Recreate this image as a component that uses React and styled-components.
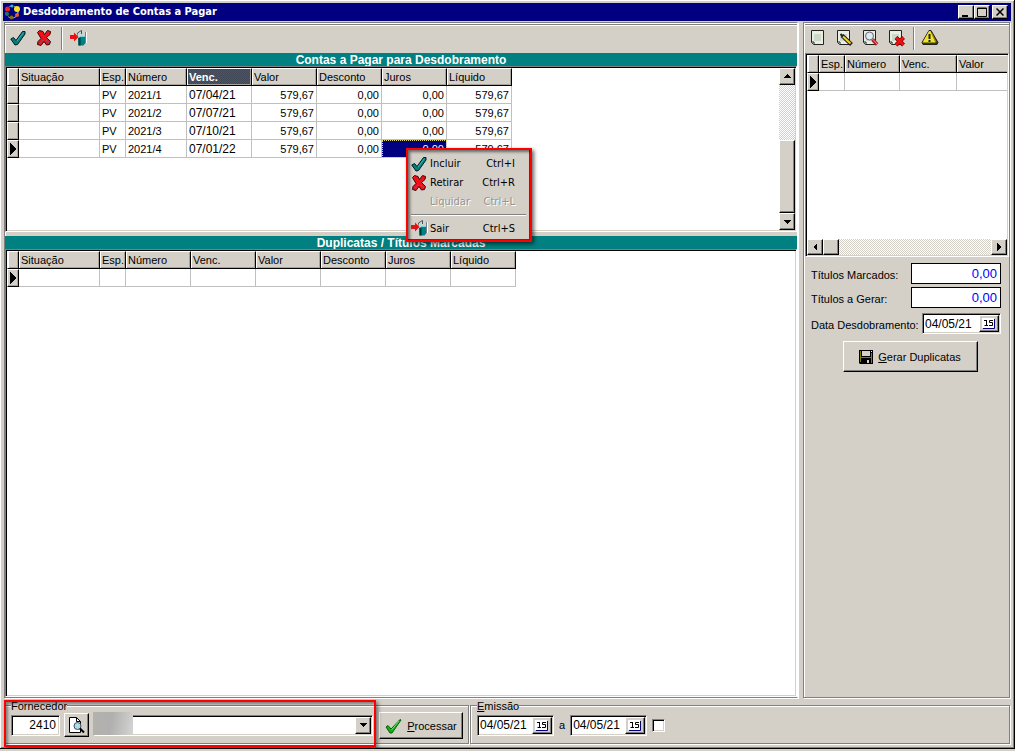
import React from "react";
import styled, { createGlobalStyle, css } from "styled-components";

const face = "#d4d0c8";
const shade = "#808080";
const navy = "#000080";
const teal = "#008080";
const sans = '"Liberation Sans", Arial, sans-serif';
const tahoma = '"DejaVu Sans Condensed", "DejaVu Sans", sans-serif';

const GlobalStyle = createGlobalStyle`
  * { box-sizing: border-box; }
  body { margin: 0; background: ${face}; color: #000; font: 11px/14px ${sans}; }
  button, input, select { font: inherit; color: inherit; margin: 0; border-radius: 0; }
`;

const raised = css`
  background: ${face};
  border: 1px solid;
  border-color: #fff #000 #000 #fff;
  box-shadow: inset -1px -1px 0 ${shade};
`;

const sunken = css`
  border: 1px solid;
  border-color: ${shade} #fff #fff ${shade};
  box-shadow: inset 1px 1px 0 #000, inset -1px -1px 0 ${face};
`;

const Window = styled.div`
  min-height: calc(100vh - 2px);
  display: flex;
  flex-direction: column;
  padding: 3px 3px 4px 3px;
  border-right: 1px solid #000;
  border-bottom: 1px solid #000;
  box-shadow: inset 1px 1px 0 #fff, inset -1px -1px 0 ${shade};
`;

const TitleBar = styled.header`
  height: 18px;
  display: flex;
  align-items: center;
  gap: 2px;
  padding: 0 3px 0 1px;
  background: ${navy};
  color: #fff;
`;

const Title = styled.h1`
  flex: 1;
  margin: 0;
  font: bold 11px/14px ${tahoma};
`;

const CaptionButton = styled.button`
  ${raised}
  width: 16px;
  height: 14px;
  padding: 0;
  display: grid;
  place-items: center;
  margin-left: ${(p) => (p.$apart ? "0" : "-2px")};
`;

const Main = styled.main`
  flex: 1;
  display: flex;
  gap: 5px;
  margin: 1px 1px 0;
`;

const Panel = styled.section`
  display: flex;
  flex-direction: column;
  flex: ${(p) => (p.$fixed ? "0 0 207px" : "1 1 0")};
  min-width: 0;
  padding: ${(p) => (p.$fixed ? "0 0 0 1px" : "0")};
  border: 1px solid ${shade};
  border-right-color: ${(p) => (p.$fixed ? shade : "#fff")};
  box-shadow: 1px 1px 0 #fff, inset 1px 1px 0 #fff;
`;

const Toolbar = styled.div`
  height: 29px;
  display: flex;
  align-items: center;
  gap: 8px;
  padding: 0 4px 2px;
  margin-top: 1px;
  border-top: 1px solid ${shade};
  box-shadow: inset 0 1px 0 #fff;
`;

const ToolButton = styled.button`
  width: 18px;
  height: 18px;
  padding: 0;
  border: 0;
  background: none;
  display: grid;
  place-items: center;
`;

const Divider = styled.span`
  width: 2px;
  height: 23px;
  margin-right: -2px;
  border-left: 1px solid ${shade};
  border-right: 1px solid #fff;
`;

const Band = styled.h2`
  height: 13px;
  margin: ${(p) => (p.$spaced ? "4px 0 0" : "0")};
  background: ${teal};
  color: #fff;
  text-align: center;
  font: bold 12px/14px ${sans};
`;

const GridFrame = styled.div`
  ${sunken}
  display: flex;
  flex-direction: ${(p) => (p.$column ? "column" : "row")};
  flex: ${(p) => (p.$height ? "none" : "1")};
  height: ${(p) => p.$height || "auto"};
  padding: 1px;
  background: #fff;
`;

const GridBody = styled.div`
  flex: 1;
  min-width: 0;
  overflow: ${(p) => (p.$clip ? "hidden" : "visible")};
`;

const Table = styled.table`
  table-layout: fixed;
  width: ${(p) => p.$width}px;
  border-collapse: separate;
  border-spacing: 0;
`;

const HeadCell = styled.th`
  height: 18px;
  padding: 0 2px;
  background: ${face};
  border: 1px solid;
  border-color: #fff #000 #000 #fff;
  border-left-width: ${(p) => (p.$mark ? "1px" : "0")};
  box-shadow: inset 1px 0 0 #fff, inset -1px -1px 0 #a8a49c;
  text-align: left;
  font-weight: normal;
  line-height: 14px;
  white-space: nowrap;
  ${(p) =>
    p.$active &&
    css`
      color: #fff;
      font-weight: bold;
      background: repeating-conic-gradient(#007878 0 25%, #404858 0 50%) 0 0 / 2px 2px;
    `}
`;

const MarkCell = styled.th`
  height: 18px;
  padding: 0;
  background: ${face};
  border: 1px solid;
  border-color: #fff #000 #000 #fff;
  box-shadow: inset -1px -1px 0 #a8a49c;
  line-height: 0;
`;

const Cell = styled.td`
  height: 18px;
  padding: 0 2px;
  border-right: 1px solid #c0c0c0;
  border-bottom: 1px solid #c0c0c0;
  line-height: 14px;
  font-size: ${(p) => (p.$date ? "12px" : "11px")};
  text-align: ${(p) => (p.$num ? "right" : "left")};
  ${(p) =>
    p.$selected &&
    css`
      position: relative;
      color: #fff;
      background: ${navy};
      outline: 1px dotted #e8e060;
      outline-offset: -1px;
    `}
`;

const Menu = styled.ul`
  position: absolute;
  z-index: 5;
  top: 8px;
  left: 24px;
  width: 126px;
  margin: 0;
  padding: 4px 1px 2px;
  list-style: none;
  background: ${face};
  border: 2px solid #f00;
  box-shadow: 2px 2px 4px rgba(0, 0, 0, 0.6), inset 2px 2px 3px rgba(0, 0, 0, 0.5), inset -1px -1px 0 #404040;
  color: #000;
  text-align: left;
`;

const MenuItem = styled.button`
  width: 100%;
  height: 19px;
  display: grid;
  grid-template-columns: 19px 1fr auto;
  align-items: center;
  padding: 0 14px 0 2px;
  border: 0;
  background: none;
  text-align: left;
  font: 11px/14px ${tahoma};
  &:disabled {
    color: #989490;
    text-shadow: 1px 1px 0 #fff;
  }
`;

const MenuRule = styled.li`
  height: 2px;
  margin: 3px 3px 3px 2px;
  border-top: 1px solid ${shade};
  border-bottom: 1px solid #fff;
`;

const Track = styled.div`
  flex: none;
  display: flex;
  flex-direction: ${(p) => (p.$vertical ? "column" : "row")};
  ${(p) => (p.$vertical ? "width: 16px;" : "height: 16px;")}
  background: repeating-conic-gradient(#fff 0 25%, ${face} 0 50%) 0 0 / 2px 2px;
`;

const ScrollButton = styled.button`
  ${raised}
  flex: none;
  width: 16px;
  height: ${(p) => (p.$tall ? "17px" : "16px")};
  padding: 0;
  display: grid;
  place-items: center;
`;

const Thumb = styled.div`
  ${raised}
  flex: none;
  width: 16px;
  height: ${(p) => (p.$tall ? "73px" : "16px")};
`;

const Spacer = styled.div`
  flex: 1;
`;

const Form = styled.form`
  display: flex;
  flex-direction: column;
  gap: 3px;
  padding: 6px 8px 0 6px;
`;

const FormRow = styled.div`
  display: flex;
  align-items: center;
  justify-content: space-between;
  height: 21px;
  margin-top: ${(p) => (p.$spaced ? "2px" : "0")};
`;

const FieldLabel = styled.label`
  white-space: nowrap;
  padding-top: 2px;
`;

const TotalInput = styled.input`
  width: 90px;
  height: 21px;
  padding: 0 3px;
  border: 1px solid #000;
  background: #fff;
  color: #00f;
  text-align: right;
  font-size: 13px;
`;

const DateBox = styled.span`
  ${sunken}
  display: flex;
  align-items: center;
  width: ${(p) => (p.$wide ? "79px" : "77px")};
  height: 21px;
  padding: 1px;
  background: #fff;
`;

const DateInput = styled.input`
  flex: 1;
  min-width: 0;
  width: 0;
  height: 16px;
  padding: 0 0 0 1px;
  border: 0;
  background: none;
  font-size: 12px;
`;

const CalendarButton = styled.button`
  ${raised}
  width: 20px;
  height: 17px;
  padding: 0;
  display: grid;
  place-items: center;
`;

const PushButton = styled.button`
  ${raised}
  display: flex;
  align-items: center;
  justify-content: center;
  gap: 5px;
  align-self: center;
  width: ${(p) => (p.$large ? "135px" : "84px")};
  height: ${(p) => (p.$large ? "31px" : "27px")};
  margin: ${(p) => (p.$large ? "4px 0 0 8px" : "0")};
  padding: 1px 0 0;
  white-space: nowrap;
`;

const Footer = styled.footer`
  display: flex;
  gap: 1px;
  margin: 1px 1px 0;
`;

const Group = styled.fieldset`
  flex: ${(p) => (p.$first ? "0 1 465px" : "1 1 0")};
  min-width: 0;
  height: 45px;
  margin: 0;
  padding: 0 5px 3px 6px;
  border: 1px solid ${shade};
  box-shadow: inset 1px 1px 0 #fff, 1px 1px 0 #fff;
`;

const Legend = styled.legend`
  height: 12px;
  padding: 0;
  line-height: 14px;
  background: ${face};
`;

const GroupRow = styled.div`
  display: flex;
  align-items: center;
  height: 28px;
  gap: ${(p) => (p.$tight ? "5px" : "6px")};
`;

const Supplier = styled.div`
  position: relative;
  flex: 1;
  display: flex;
  align-items: center;
  gap: 4px;
  height: 28px;
`;

const Highlight = styled.span`
  position: absolute;
  inset: -11px -3px -8px -7px;
  border: 2px solid #f00;
  box-shadow: 2px 2px 4px rgba(0, 0, 0, 0.5), inset 2px 2px 3px rgba(0, 0, 0, 0.4);
  pointer-events: none;
`;

const CodeInput = styled.input`
  ${sunken}
  width: 49px;
  height: 21px;
  padding: 0 3px;
  background: #fff;
  text-align: right;
  font-size: 12px;
`;

const SearchButton = styled.button`
  ${raised}
  width: 25px;
  height: 24px;
  padding: 0;
  display: grid;
  place-items: center;
`;

const Combo = styled.span`
  position: relative;
  flex: 1;
  height: 21px;
  display: flex;
`;

const Select = styled.select`
  ${sunken}
  appearance: none;
  width: 100%;
  height: 21px;
  padding: 0 20px 0 42px;
  background: #fff;
`;

const ComboArrow = styled.span`
  ${raised}
  position: absolute;
  top: 2px;
  right: 2px;
  width: 16px;
  height: 17px;
  display: grid;
  place-items: center;
  pointer-events: none;
`;

const Redacted = styled.span`
  position: absolute;
  top: -3px;
  left: 0;
  width: 40px;
  height: 23px;
  background: linear-gradient(100deg, #b4b2ae, #b0b0ae 45%, #d4d4d2);
`;

const Check = styled.input`
  ${sunken}
  appearance: none;
  width: 13px;
  height: 13px;
  background: #fff;
`;

const icon = { "aria-hidden": true };

const CheckIcon = () => (
  <svg width="16" height="16" viewBox="0 0 16 16" {...icon}>
    <path d="M.8 9 3.500 7.500 6 10.500 12.500 1.500 15 1.500V4L7.500 14.500 5 15Z" fill="#008080" stroke="#001818" strokeLinejoin="round" />
    <path d="M7 11 13.500 2.500" stroke="#40b8b8" />
  </svg>
);

const CrossIcon = () => (
  <svg width="16" height="16" viewBox="0 0 16 16" {...icon}>
    <path d="M1.500 2.500 3.500 .5 7 1.500 8.500 4.500 11.500 .5 14.500 1.500 14 4.500 10.500 7.500 14.500 11.500 13.500 14.500 10.500 15 8 11.500 5 15.500 1.500 14.500 2 11.500 5 8.500Z" fill="#f01018" stroke="#400" />
    <path d="M4 13.500 8 9.500M10 10.500 13 13" stroke="#5078a0" strokeDasharray="2 1" />
  </svg>
);

const ExitIcon = () => (
  <svg width="17" height="17" viewBox="0 0 17 17" {...icon}>
    <path d="M7.500 6V3L11.500 .5V4" fill="none" stroke="#405060" />
    <path d="M7.500 4 11 1.500V12L7.500 15Z" fill="#b8dcdc" />
    <path d="M8 8 11 6.500H15.500V13L13.500 15.500H8.500Z" fill="#008080" />
    <path d="M9.500 8V15.500" stroke="#003838" strokeWidth="2" />
    <path d="M11 6.500H15" stroke="#70d8d8" />
    <path d="M15.500 2V13" stroke="#708090" />
    <path d="M16.500 2V13" stroke="#fff" />
    <path d="M0 5H4V2.500L8.500 7 4 11.500V9H0Z" fill="#e81010" />
  </svg>
);

const Sheet = () => (
  <>
    <path d="M2.500 1.500H14.500V15.500H4.500L2.500 13.500Z" fill="#e8eee4" stroke="#222" />
    <path d="M5 5H12V12H5Z" fill="#ccd8c8" />
    <path d="M2.500 13H5V15.500" fill="#fff" stroke="#222" />
  </>
);

const PageIcon = ({ kind }) => (
  <svg width="18" height="18" viewBox="0 0 18 18" {...icon}>
    <Sheet />
    {kind === "edit" && (
      <>
        <path d="M7 6.500 16.500 15.500" stroke="#222" strokeWidth="4" />
        <path d="M8 7.500 15.500 14.500" stroke="#f0d020" strokeWidth="2" />
        <path d="M5.500 5 7.500 7" stroke="#222" strokeWidth="2" />
      </>
    )}
    {kind === "view" && (
      <>
        <circle cx="8.500" cy="7" r="4" fill="#dfe8f0" stroke="#667" />
        <path d="M11.500 10.500 16 15.500" stroke="#b02020" strokeWidth="3.500" />
        <path d="M12 10.500 16 15" stroke="#ff9090" />
      </>
    )}
    {kind === "delete" && (
      <>
        <path d="M9 8.500 16.500 16M16.500 8.500 9 16" stroke="#500" strokeWidth="4" />
        <path d="M9 8.500 16.500 16M16.500 8.500 9 16" stroke="#f01010" strokeWidth="3" />
      </>
    )}
  </svg>
);

const WarnIcon = () => (
  <svg width="18" height="18" viewBox="0 0 18 18" {...icon}>
    <path d="M8 1.500H10L17 13.500 16 15.500H2L1 13.500Z" fill="#403c00" stroke="#222" strokeLinejoin="round" />
    <path d="M8 2H9.500L14.500 13.500H1.500Z" fill="#f0e428" />
    <path d="M10.500 4 15 13" stroke="#a89c10" />
    <path d="M8.500 5V10M8.500 11V13" stroke="#222" strokeWidth="2" />
  </svg>
);

const AppIcon = () => (
  <svg width="17" height="16" viewBox="0 0 17 16" {...icon}>
    <circle cx="8" cy="8" r="6" fill="none" stroke="#d8d8e8" strokeDasharray="3 2" />
    <circle cx="3.500" cy="5" r="2.500" fill="#f02020" />
    <circle cx="13" cy="5" r="3" fill="#f4e420" />
    <circle cx="3" cy="10" r="2" fill="#207850" />
    <circle cx="7.500" cy="13.500" r="2" fill="#806820" />
    <circle cx="13" cy="11" r="2" fill="#e06030" />
    <circle cx="8" cy="2" r="1.500" fill="#20c0d0" />
  </svg>
);

const SaveIcon = () => (
  <svg width="14" height="14" viewBox="0 0 14 14" {...icon}>
    <path d="M0 0H14V14H1L0 13Z" fill="#000" />
    <path d="M1 1H2V12H1ZM12 3H13V13H12ZM2 7H12V8H2Z" fill="#808000" />
    <path d="M3 1H11V6H3Z" fill="#d4d0c8" />
    <path d="M8 10H10V13H8Z" fill="#d4d0c8" />
    <path d="M12 1H13V2H12Z" fill="#fff" />
  </svg>
);

const ProcessIcon = () => (
  <svg width="17" height="16" viewBox="0 0 17 16" {...icon}>
    <path d="M1 9 3 7.500 6 11 15 1.500 16 2 7 15 5 15Z" fill="#10b010" stroke="#086008" />
    <path d="M6.500 12 14 3" stroke="#60f060" />
  </svg>
);

const SearchIcon = () => (
  <svg width="17" height="18" viewBox="0 0 17 18" {...icon}>
    <path d="M1.500 1.500H8.500L12.500 5.500V16.500H1.500Z" fill="#fff" stroke="#000" />
    <path d="M8.500 1.500V5.500H12.500" fill="none" stroke="#000" />
    <circle cx="9.500" cy="10" r="3.500" fill="#a8e0e0" stroke="#446" />
    <path d="M12 12.500 16 16.500" stroke="#000" strokeWidth="2" />
  </svg>
);

const CalendarIcon = () => (
  <svg width="14" height="11" viewBox="0 0 14 11" {...icon}>
    <path d="M0 0H12V10H0Z" fill="#fff" />
    <path d="M12.500 1V10.500H1" fill="none" stroke="#000080" />
    <path d="M2 2.500H4M4.500 2V7M2.500 7.500H6M11 2.500H7.500V4.500H10.500V7.500H7" fill="none" stroke="#000" />
  </svg>
);

const arrows = {
  up: "M0 5 4 1 8 5Z",
  down: "M0 2 4 6 8 2Z",
  left: "M6 0 2 4 6 8Z",
  right: "M2 0 6 4 2 8Z",
};

const Arrow = ({ dir }) => (
  <svg width="8" height="8" viewBox="0 0 8 8" shapeRendering="crispEdges" {...icon}>
    <path d={arrows[dir]} />
  </svg>
);

const RowMark = () => (
  <svg width="8" height="12" viewBox="0 0 8 12" shapeRendering="crispEdges" {...icon}>
    <path d="M1 0 7 6 1 12Z" />
  </svg>
);

const labels = ["Situação", "Esp.", "Número", "Venc.", "Valor", "Desconto", "Juros", "Líquido"];
const entries = [
  ["", "PV", "2021/1", "07/04/21", "579,67", "0,00", "0,00", "579,67"],
  ["", "PV", "2021/2", "07/07/21", "579,67", "0,00", "0,00", "579,67"],
  ["", "PV", "2021/3", "07/10/21", "579,67", "0,00", "0,00", "579,67"],
  ["", "PV", "2021/4", "07/01/22", "579,67", "0,00", "0,00", "579,67"],
];

function DataGrid({ name, heads, widths, rows, activeHead, selectedCol, children }) {
  const all = [12, ...widths];
  return (
    <Table aria-label={name} $width={all.reduce((a, b) => a + b, 0)}>
      <colgroup>
        {all.map((w, i) => (
          <col key={i} width={w} />
        ))}
      </colgroup>
      <thead>
        <tr>
          <HeadCell $mark />
          {heads.map((h) => (
            <HeadCell key={h} scope="col" $active={h === activeHead}>
              {h}
            </HeadCell>
          ))}
        </tr>
      </thead>
      <tbody>
        {rows.map((row, r) => {
          const current = r === rows.length - 1;
          return (
            <tr key={r}>
              <MarkCell>{current && <RowMark />}</MarkCell>
              {row.map((v, c) => {
                const selected = current && c === selectedCol;
                return (
                  <Cell key={c} $num={c > 3} $date={c === 3} $selected={selected}>
                    {v}
                    {selected && children}
                  </Cell>
                );
              })}
            </tr>
          );
        })}
      </tbody>
    </Table>
  );
}

function ContextMenu() {
  return (
    <Menu>
      <li><MenuItem><CheckIcon /><span>Incluir</span><span>Ctrl+I</span></MenuItem></li>
      <li><MenuItem><CrossIcon /><span>Retirar</span><span>Ctrl+R</span></MenuItem></li>
      <li><MenuItem disabled><i /><span>Liquidar</span><span>Ctrl+L</span></MenuItem></li>
      <MenuRule role="separator" />
      <li><MenuItem><ExitIcon /><span>Sair</span><span>Ctrl+S</span></MenuItem></li>
    </Menu>
  );
}

function DateField({ id, label, wide }) {
  return (
    <DateBox $wide={wide}>
      <DateInput id={id} aria-label={label} defaultValue="04/05/21" />
      <CalendarButton type="button" aria-label="Calendário"><CalendarIcon /></CalendarButton>
    </DateBox>
  );
}

export default function App() {
  return (
    <Window>
      <GlobalStyle />
      <TitleBar>
        <AppIcon />
        <Title>Desdobramento de Contas a Pagar</Title>
        <CaptionButton $apart aria-label="Minimizar">
          <svg width="10" height="9" {...icon}><path d="M1 7H7V9H1Z" /></svg>
        </CaptionButton>
        <CaptionButton aria-label="Maximizar">
          <svg width="10" height="10" {...icon}><path d="M.5 1H9.500V9.500H.5ZM.5 1.500H9.500" fill="none" stroke="#000" /></svg>
        </CaptionButton>
        <CaptionButton $apart aria-label="Fechar">
          <svg width="8" height="8" {...icon}><path d="M.5 .5 7.500 7.500M7.500 .5 .5 7.500" stroke="#000" strokeWidth="1.500" /></svg>
        </CaptionButton>
      </TitleBar>

      <Main>
        <Panel>
          <Toolbar>
            <ToolButton aria-label="Incluir"><CheckIcon /></ToolButton>
            <ToolButton aria-label="Retirar"><CrossIcon /></ToolButton>
            <Divider />
            <ToolButton aria-label="Sair"><ExitIcon /></ToolButton>
          </Toolbar>
          <Band>Contas a Pagar para Desdobramento</Band>
          <GridFrame $height="166px">
            <GridBody>
              <DataGrid
                name="Contas a Pagar para Desdobramento"
                heads={labels}
                widths={[81, 26, 61, 65, 65, 65, 65, 65]}
                rows={entries}
                activeHead="Venc."
                selectedCol={6}
              >
                <ContextMenu />
              </DataGrid>
            </GridBody>
            <Track $vertical>
              <ScrollButton $tall aria-label="Para cima"><Arrow dir="up" /></ScrollButton>
              <Spacer />
              <Thumb $tall />
              <ScrollButton $tall aria-label="Para baixo"><Arrow dir="down" /></ScrollButton>
            </Track>
          </GridFrame>
          <Band $spaced>Duplicatas / Títulos Marcadas</Band>
          <GridFrame>
            <GridBody $clip>
              <DataGrid
                name="Duplicatas / Títulos Marcadas"
                heads={labels}
                widths={[81, 26, 65, 65, 65, 65, 65, 65]}
                rows={[Array(8).fill("")]}
              />
            </GridBody>
          </GridFrame>
        </Panel>

        <Panel $fixed>
          <Toolbar>
            <ToolButton aria-label="Novo"><PageIcon /></ToolButton>
            <ToolButton aria-label="Editar"><PageIcon kind="edit" /></ToolButton>
            <ToolButton aria-label="Visualizar"><PageIcon kind="view" /></ToolButton>
            <ToolButton aria-label="Excluir"><PageIcon kind="delete" /></ToolButton>
            <Divider />
            <ToolButton aria-label="Aviso"><WarnIcon /></ToolButton>
          </Toolbar>
          <GridFrame $column $height="204px">
            <GridBody $clip>
              <DataGrid
                name="Títulos"
                heads={["Esp.", "Número", "Venc.", "Valor"]}
                widths={[26, 55, 57, 65]}
                rows={[Array(4).fill("")]}
              />
            </GridBody>
            <Track>
              <ScrollButton aria-label="Para a esquerda"><Arrow dir="left" /></ScrollButton>
              <Thumb />
              <Spacer />
              <ScrollButton aria-label="Para a direita"><Arrow dir="right" /></ScrollButton>
            </Track>
          </GridFrame>
          <Form onSubmit={(e) => e.preventDefault()}>
            <FormRow>
              <FieldLabel htmlFor="marcados">Títulos Marcados:</FieldLabel>
              <TotalInput id="marcados" defaultValue="0,00" />
            </FormRow>
            <FormRow>
              <FieldLabel htmlFor="gerar">Títulos a Gerar:</FieldLabel>
              <TotalInput id="gerar" defaultValue="0,00" />
            </FormRow>
            <FormRow $spaced>
              <FieldLabel htmlFor="data">Data Desdobramento:</FieldLabel>
              <DateField id="data" wide />
            </FormRow>
            <PushButton $large>
              <SaveIcon />
              <span><u>G</u>erar Duplicatas</span>
            </PushButton>
          </Form>
        </Panel>
      </Main>

      <Footer>
        <Group $first>
          <Legend>Fornecedor</Legend>
          <GroupRow>
            <Supplier>
              <CodeInput aria-label="Código do fornecedor" defaultValue="2410" />
              <SearchButton aria-label="Pesquisar fornecedor"><SearchIcon /></SearchButton>
              <Combo>
                <Select aria-label="Fornecedor" defaultValue=""><option value=""></option></Select>
                <Redacted />
                <ComboArrow><Arrow dir="down" /></ComboArrow>
              </Combo>
              <Highlight />
            </Supplier>
            <PushButton>
              <ProcessIcon />
              <span><u>P</u>rocessar</span>
            </PushButton>
          </GroupRow>
        </Group>
        <Group>
          <Legend><u>E</u>missão</Legend>
          <GroupRow $tight>
            <DateField label="Emissão inicial" />
            <span>a</span>
            <DateField label="Emissão final" />
            <Check type="checkbox" aria-label="Filtrar por emissão" />
          </GroupRow>
        </Group>
      </Footer>
    </Window>
  );
}
